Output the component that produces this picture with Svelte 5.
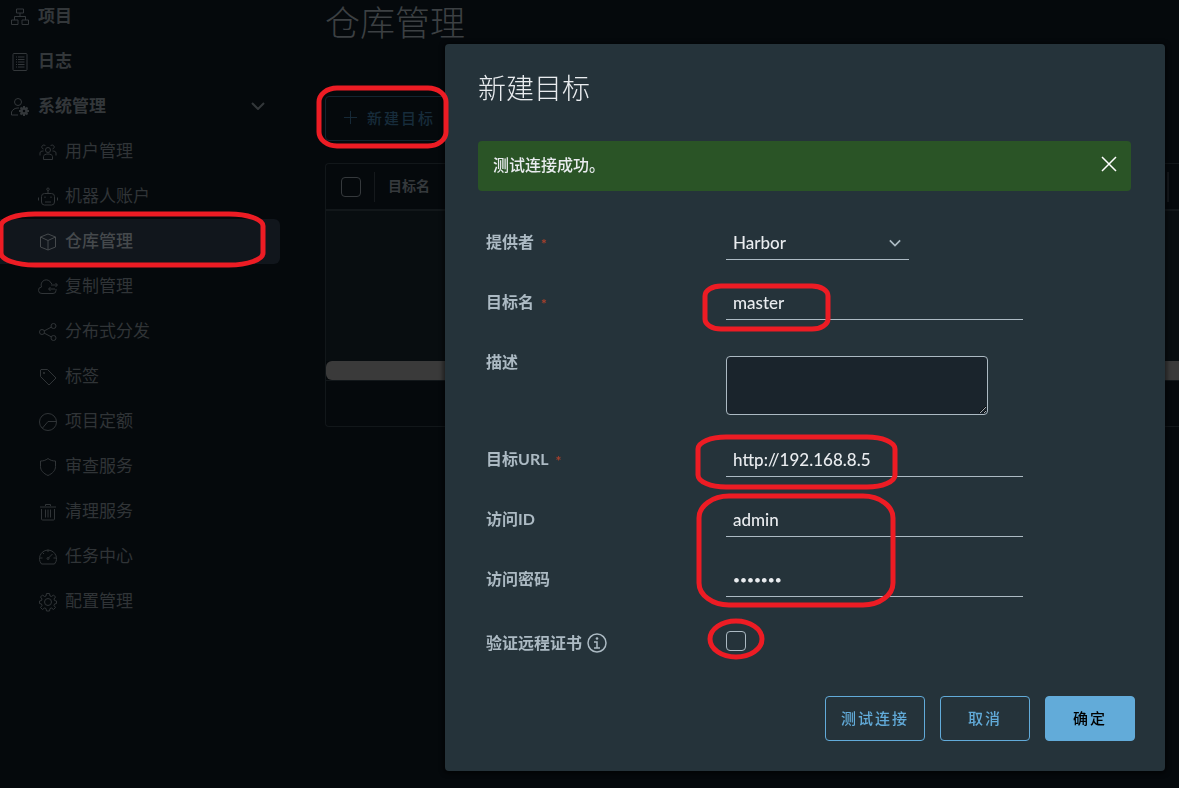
<script>
    let provider = $state('Harbor');
    let showAlert = $state(true);
    let target = $state({
        name: 'master',
        description: '',
        url: 'http://192.168.8.5',
        accessId: 'admin',
        secret: '1234567',
        verifyCert: false
    });

    const mainNav = [
        { label: '项目', icon: 'organization' },
        { label: '日志', icon: 'list' },
        { label: '系统管理', icon: 'administrator', open: true }
    ];

    const systemNav = [
        { label: '用户管理', icon: 'users' },
        { label: '机器人账户', icon: 'robot' },
        { label: '仓库管理', icon: 'block', active: true },
        { label: '复制管理', icon: 'cloud' },
        { label: '分布式分发', icon: 'share' },
        { label: '标签', icon: 'tag' },
        { label: '项目定额', icon: 'pie' },
        { label: '审查服务', icon: 'shield' },
        { label: '清理服务', icon: 'trash' },
        { label: '任务中心', icon: 'dashboard' },
        { label: '配置管理', icon: 'cog' }
    ];

    // 36x36 stroke icons
    const icons = {
        organization: 'M11 2h14v8H11zM1 24h13v9H1zM22 24h13v9H22zM18 10v7M7 24v-7h22v7',
        list: 'M6 1h24a2 2 0 0 1 2 2v30a2 2 0 0 1-2 2H6a2 2 0 0 1-2-2V3a2 2 0 0 1 2-2zM10 8h2M14 8h13M10 13h2M14 13h13M10 18h2M14 18h13M10 23h2M14 23h13M10 28h2M14 28h13',
        administrator: 'M14 1a7 7 0 1 1 0 14a7 7 0 1 1 0-14M14 34H1v-6c2-5 7-8 13-8h2',
        users: 'M18 9a5 5 0 1 1 0 10a5 5 0 1 1 0-10M9 33v-6c0-3 4-5 9-5s9 2 9 5v6zM13 6a4 4 0 1 0-4 6M23 6a4 4 0 1 1 4 6M2 25v-5c0-3 3-4 7-4M34 25v-5c0-3-3-4-7-4',
        robot: 'M11 11h14a6 6 0 0 1 6 6v11a6 6 0 0 1-6 6H11a6 6 0 0 1-6-6V17a6 6 0 0 1 6-6zM18 11V5M18 0a2.500 2.500 0 1 1 0 5a2.500 2.500 0 1 1 0-5M12 17v3M24 17v3M12 28h12M-1 19v6M37 19v6',
        block: 'M18 2l15 6v20l-15 6l-15-6V8zM3 8l15 7l15-7M18 15v19',
        cloud: 'M34 22v3a6 6 0 0 1-6 6H6a6.500 6.500 0 0 1-1-13a10 10 0 0 1 19-8l2 2M24 14h12M33 10l4 4l-4 4M32 22H20M23 18l-4 4l4 4',
        share: 'M29 1a5 5 0 1 1 0 10a5 5 0 1 1 0-10M6 13a5 5 0 1 1 0 10a5 5 0 1 1 0-10M29 25a5 5 0 1 1 0 10a5 5 0 1 1 0-10M10 16l15-8M10 20l15 8',
        tag: 'M4 3h13l17 17L20 34L3 17V4zM9 9h2v2H9z',
        pie: 'M18 1a17 17 0 1 1 0 34a17 17 0 1 1 0-34M35 17H18L7 30',
        shield: 'M18 1c5 4 10 5 15 5v11c0 8-6 14-15 18C9 31 3 25 3 17V6c5 0 10-1 15-5z',
        trash: 'M2 8h32M13 6V3h10v3M5 12v20a2 2 0 0 0 2 2h22a2 2 0 0 0 2-2V12M13 13v16M18 13v16M23 13v16',
        dashboard: 'M5 32h26l3-5a17 17 0 1 0-32 0zM18 3v5M2 20h5M29 20h5M7 9l3 3M18 21l9-9M18 19a2 2 0 1 1 0 4a2 2 0 1 1 0-4',
        cog: 'M15 1h6l1 5l3 1l4-3l4 4l-3 4l1 3l4 1v5l-4 1l-1 3l3 4l-4 4l-4-3l-3 1l-1 5h-6l-1-5l-3-1l-4 3l-4-4l3-4l-1-3l-4-1v-5l4-1l1-3l-3-4l4-4l4 3l3-1zM18 11a7 7 0 1 1 0 14a7 7 0 1 1 0-14'
    };

    // hand-drawn highlights over the dialog steps
    const marks = [
        { x: 319, y: 88, w: 127, h: 58, rx: 18, ry: 14 },
        { x: 1, y: 214, w: 262, h: 51, rx: 34, ry: 12 },
        { x: 705, y: 286, w: 123, h: 43, rx: 16, ry: 10 },
        { x: 698, y: 437, w: 197, h: 50, rx: 28, ry: 12 },
        { x: 699, y: 496, w: 194, h: 109, rx: 30, ry: 22 },
        { x: 710, y: 621, w: 52, h: 36, rx: 26, ry: 18 }
    ];
</script>

{#snippet icon(name)}
    <svg class="icon" viewBox="0 0 36 36" aria-hidden="true">
        <path d={icons[name]} />
        {#if name === 'administrator'}
            <circle class="gear" cx="26" cy="26" r="5" />
            <path class="teeth" d="M26 16v4M26 32v4M16 26h4M32 26h4M19 19l3 3M30 30l3 3M19 33l3-3M30 22l3-3" />
        {/if}
    </svg>
{/snippet}

<div class="layout">
    <nav class="sidebar">
        {#each mainNav as item}
            <a class="nav-link" href="#{item.icon}">
                {@render icon(item.icon)}
                <span>{item.label}</span>
                {#if item.open}
                    <svg class="caret" viewBox="0 0 14 8" aria-hidden="true"><path d="M1 1l6 6l6-6" /></svg>
                {/if}
            </a>
        {/each}
        {#each systemNav as item}
            <a class="nav-link child" class:active={item.active} href="#{item.icon}">
                {@render icon(item.icon)}
                <span>{item.label}</span>
            </a>
        {/each}
    </nav>

    <main class="content">
        <h1>仓库管理</h1>
        <button class="btn add" type="button">
            <svg class="plus" viewBox="0 0 16 16" aria-hidden="true"><path d="M8 1v14M1 8h14" /></svg>
            新建目标
        </button>
        <div class="datagrid">
            <table>
                <thead>
                    <tr>
                        <th class="select"><input type="checkbox" aria-label="全选" /></th>
                        <th class="name"><div>目标名</div></th>
                        <th class="last"><div></div></th>
                    </tr>
                </thead>
                <tbody>
                    <tr><td colspan="3"></td></tr>
                </tbody>
            </table>
            <div class="scrollbar"></div>
            <div class="datagrid-footer"></div>
        </div>
    </main>
</div>

<div class="backdrop">
    <div class="modal" role="dialog" aria-labelledby="modal-title">
        <h2 id="modal-title">新建目标</h2>
        {#if showAlert}
            <div class="alert" role="alert">
                <span>测试连接成功。</span>
                <button class="close" type="button" aria-label="关闭" onclick={() => (showAlert = false)}>
                    <svg viewBox="0 0 16 16" aria-hidden="true"><path d="M1 1l14 14M15 1L1 15" /></svg>
                </button>
            </div>
        {/if}

        <form>
            <div class="row">
                <label for="provider">提供者<span class="required">*</span></label>
                <div class="select-wrap">
                    <select id="provider" bind:value={provider}>
                        <option>Harbor</option>
                    </select>
                    <svg viewBox="0 0 14 8" aria-hidden="true"><path d="M1 1l6 6l6-6" /></svg>
                </div>
            </div>
            <div class="row">
                <label for="name">目标名<span class="required">*</span></label>
                <input id="name" type="text" bind:value={target.name} />
            </div>
            <div class="row">
                <label for="description">描述</label>
                <textarea id="description" bind:value={target.description}></textarea>
            </div>
            <div class="row">
                <label for="url">目标URL<span class="required">*</span></label>
                <input id="url" type="text" bind:value={target.url} />
            </div>
            <div class="row">
                <label for="access-id">访问ID</label>
                <input id="access-id" type="text" bind:value={target.accessId} />
            </div>
            <div class="row">
                <label for="secret">访问密码</label>
                <input id="secret" type="password" bind:value={target.secret} />
            </div>
            <div class="row cert">
                <label for="verify">
                    验证远程证书
                    <svg class="info" viewBox="0 0 20 20" aria-hidden="true">
                        <circle cx="10" cy="10" r="9" />
                        <path d="M7 9h3v6M7 15h6" />
                        <circle class="dot" cx="10" cy="5.5" r="1.3" />
                    </svg>
                </label>
                <input id="verify" type="checkbox" bind:checked={target.verifyCert} />
            </div>
        </form>

        <div class="modal-footer">
            <button class="btn" type="button">测试连接</button>
            <button class="btn" type="button">取消</button>
            <button class="btn primary" type="button">确定</button>
        </div>
    </div>
</div>

<svg class="marks" aria-hidden="true">
    {#each marks as m}
        <rect x={m.x} y={m.y} width={m.w} height={m.h} rx={m.rx} ry={m.ry} />
    {/each}
</svg>

<style>
    :global(body) {
        background: #05090c;
        overflow: hidden;
        font-family: Lato, "Noto Sans CJK SC", sans-serif;
    }
    svg {
        fill: none;
        stroke: currentColor;
    }
    .layout {
        display: flex;
        min-height: 100vh;
    }
    .sidebar {
        flex: none;
        width: 280px;
        margin-top: -6px;
    }
    .nav-link {
        display: flex;
        align-items: center;
        box-sizing: border-box;
        height: 45px;
        padding: 0 15px 2px 11px;
        border-radius: 0 6px 6px 0;
        color: #33373a;
        font-size: 17px;
        font-weight: 700;
        line-height: 24px;
        text-decoration: none;
    }
    .nav-link.child {
        padding-left: 39px;
        color: #303437;
        font-weight: 400;
    }
    .nav-link.active {
        background: #11161c;
        color: #45494c;
        font-weight: 500;
    }
    .icon {
        width: 18px;
        height: 18px;
        margin: 3px 9px 0 0;
        stroke-width: 2;
        overflow: visible;
    }
    .child .icon {
        margin-right: 8px;
    }
    .icon .gear {
        stroke-width: 5;
    }
    .icon .teeth {
        stroke-width: 4;
    }
    .caret {
        width: 14px;
        height: 8px;
        margin-left: auto;
        stroke-width: 2;
    }
    .content {
        flex: 1;
        min-width: 0;
        padding-left: 45px;
    }
    h1 {
        margin: 0 0 52px;
        color: #3c4043;
        font-size: 35px;
        font-weight: 200;
        line-height: 44px;
    }
    .btn {
        box-sizing: border-box;
        height: 45px;
        min-width: 90px;
        padding: 0 15px 2px;
        border: 1px solid #62abd9;
        border-radius: 4px;
        background: transparent;
        color: #62abd9;
        font-family: inherit;
        font-size: 15px;
        font-weight: 500;
        letter-spacing: 2px;
    }
    .btn.primary {
        background: #62abd9;
        color: #000;
    }
    .btn.add {
        display: flex;
        align-items: center;
        gap: 9px;
        padding: 0 17px 2px;
        border-color: #13242f;
        color: #172c3b;
    }
    .plus {
        width: 15px;
        height: 15px;
    }
    .datagrid {
        margin-top: 22px;
        border: 1px solid #12171a;
        border-right: none;
        border-radius: 4px 0 0 4px;
    }
    table {
        width: 100%;
        border-collapse: collapse;
        table-layout: fixed;
    }
    th {
        height: 45px;
        padding: 0;
        border-bottom: 2px solid #12171a;
        color: #35393c;
        font-size: 14px;
        font-weight: 700;
        line-height: 28px;
        text-align: left;
    }
    th div {
        height: 30px;
        padding-left: 13px;
        border-left: 1px solid #15191c;
    }
    th.select {
        width: 48px;
    }
    th.last {
        width: 12px;
    }
    th.last div {
        padding: 0;
        border-left-width: 2px;
    }
    td {
        height: 150px;
        padding: 0;
        background: #080d10;
    }
    .scrollbar {
        height: 19px;
        border-radius: 6px 0 0 6px;
        background: #3a3a3a;
    }
    .datagrid-footer {
        height: 45px;
        border-top: 1px solid #12171a;
    }
    .backdrop {
        position: fixed;
        inset: 0;
        display: flex;
        justify-content: flex-end;
        align-items: flex-start;
        padding: 44px 14px 0;
    }
    .modal {
        box-sizing: border-box;
        width: 720px;
        padding: 26px 34px 30px 33px;
        border-radius: 4px;
        background: #25333a;
        box-shadow: 0 1px 4px 2px rgba(0, 0, 0, 0.5);
    }
    h2 {
        margin: 0 0 35px;
        color: #e9ecef;
        font-size: 28px;
        font-weight: 300;
        line-height: 36px;
    }
    .alert {
        display: flex;
        align-items: center;
        justify-content: space-between;
        box-sizing: border-box;
        height: 50px;
        padding: 0 14px 4px 15px;
        border-radius: 4px;
        background: #2a5426;
        color: #e9ecef;
        font-size: 16px;
        font-weight: 500;
    }
    .close {
        display: flex;
        padding: 0;
        border: none;
        background: none;
        color: #fff;
    }
    .close svg {
        width: 16px;
        height: 16px;
        stroke-width: 1.5;
    }
    form {
        display: flex;
        flex-direction: column;
        gap: 30px;
        margin-top: 39px;
        padding-left: 8px;
    }
    .row {
        display: flex;
        align-items: flex-start;
    }
    label {
        display: flex;
        align-items: center;
        flex: none;
        width: 240px;
        color: #acbac3;
        font-size: 16px;
        font-weight: 700;
        line-height: 24px;
    }
    .required {
        margin-left: 7px;
        padding-top: 3px;
        color: #a8402c;
        font-size: 14px;
        line-height: 20px;
    }
    input[type="text"],
    input[type="password"],
    select {
        box-sizing: border-box;
        width: 297px;
        height: 30px;
        padding: 0 7px 4px;
        border: none;
        border-bottom: 1px solid #acbac3;
        border-radius: 0;
        outline: none;
        background: transparent;
        color: #e9ecef;
        font-family: inherit;
        font-size: 17px;
        font-weight: 500;
    }
    input[type="password"] {
        font-size: 12px;
    }
    .select-wrap {
        position: relative;
        width: 183px;
    }
    .select-wrap select {
        display: block;
        width: 100%;
        appearance: none;
    }
    .select-wrap svg {
        position: absolute;
        top: 9px;
        right: 8px;
        width: 12px;
        height: 8px;
        color: #acbac3;
        stroke-width: 2;
        pointer-events: none;
    }
    textarea {
        box-sizing: border-box;
        width: 262px;
        height: 59px;
        margin: 6px 0 2px;
        border: 1px solid #acbac3;
        border-radius: 4px;
        background: #1a242c;
        color: #e9ecef;
        color-scheme: dark;
        font: inherit;
    }
    input[type="checkbox"] {
        box-sizing: border-box;
        width: 20px;
        height: 20px;
        margin: 0;
        border: 1px solid #acbac3;
        border-radius: 4px;
        appearance: none;
    }
    input[type="checkbox"]:checked {
        background: #62abd9;
    }
    th.select input[type="checkbox"] {
        display: block;
        margin-left: 15px;
        border-color: #35393c;
    }
    .cert {
        padding-top: 4px;
    }
    .info {
        width: 20px;
        height: 20px;
        margin-left: 5px;
        stroke-width: 1.5;
    }
    .info .dot {
        fill: currentColor;
        stroke: none;
    }
    .modal-footer {
        display: flex;
        justify-content: flex-end;
        gap: 15px;
        margin: 41px -4px 0 0;
    }
    .marks {
        position: fixed;
        inset: 0;
        width: 100%;
        height: 100%;
        stroke: #ed1c24;
        stroke-width: 5;
        pointer-events: none;
    }
</style>
